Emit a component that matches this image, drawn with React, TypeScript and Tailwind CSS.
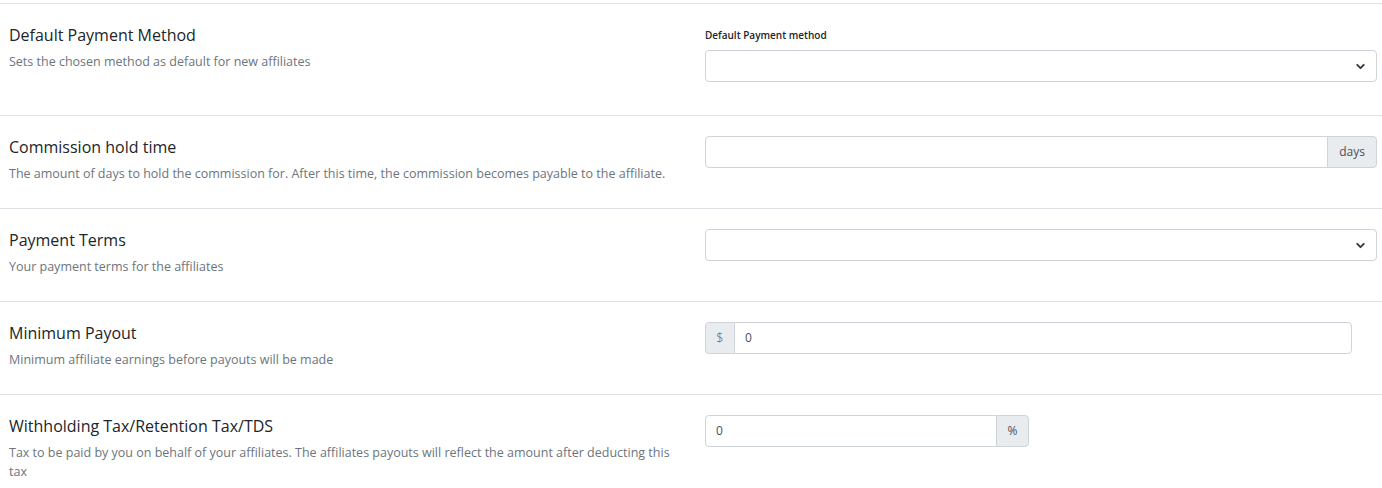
import { ChevronDown } from "lucide-react";

type Row = {
  title: string;
  desc: string;
  control: React.ReactNode;
};

const inputBase = "h-[32px] border border-[#ced4da] text-[12px] text-[#495057] flex items-center";

function SelectBox() {
  return (
    <div className={`${inputBase} bg-white px-[10px] rounded-[4px] justify-end w-full`}>
      <ChevronDown className="w-[13px] h-[13px] text-[#343a40] -mr-[1px]" strokeWidth={3.5} />
    </div>
  );
}

const rows: Row[] = [
  {
    title: "Default Payment Method",
    desc: "Sets the chosen method as default for new affiliates",
    control: (
      <div>
        <div className="text-[10px] font-semibold text-[#212529] h-[14px] leading-[14px] mb-[8px] -mt-[4px]">Default Payment method</div>
        <SelectBox />
      </div>
    ),
  },
  {
    title: "Commission hold time",
    desc: "The amount of days to hold the commission for. After this time, the commission becomes payable to the affiliate.",
    control: (
      <div className="flex">
        <div className={`${inputBase} bg-white px-[10px] rounded-l-[4px] flex-1`}></div>
        <div className={`${inputBase} rounded-r-[4px] -ml-px bg-[#e9ecef] w-[50px] justify-center text-[#6c757d]`}>days</div>
      </div>
    ),
  },
  {
    title: "Payment Terms",
    desc: "Your payment terms for the affiliates",
    control: <SelectBox />,
  },
  {
    title: "Minimum Payout",
    desc: "Minimum affiliate earnings before payouts will be made",
    control: (
      <div className="flex w-[647px]">
        <div className={`${inputBase} rounded-l-[4px] bg-[#e9ecef] w-[30px] justify-center text-[#6c757d] font-light`}>$</div>
        <div className={`${inputBase} bg-white px-[10px] rounded-r-[4px] -ml-px flex-1`}>0</div>
      </div>
    ),
  },
  {
    title: "Withholding Tax/Retention Tax/TDS",
    desc: "Tax to be paid by you on behalf of your affiliates. The affiliates payouts will reflect the amount after deducting this tax",
    control: (
      <div className="flex w-[324px]">
        <div className={`${inputBase} bg-white px-[10px] rounded-l-[4px] flex-1`}>0</div>
        <div className={`${inputBase} rounded-r-[4px] -ml-px bg-[#e9ecef] w-[33px] justify-center text-[#6c757d]`}>%</div>
      </div>
    ),
  },
];

export default function App() {
  return (
    <div className="bg-white w-[1382px] h-[488px] overflow-hidden pt-[3px]" style={{ fontFamily: '"Open Sans", "Noto Sans", sans-serif' }}>
      {rows.map((row, i) => (
        <div
          key={row.title}
          className={`border-t border-[#dee2e6] flex ${i === 0 ? "h-[112px]" : "h-[93px]"}`}
        >
          <div className="w-[691px] pl-[9px] pr-[6px] pt-[20px]">
            <div className="text-[16px] leading-[22px] text-[#212529]">{row.title}</div>
            <div className="text-[12.5px] leading-[19px] text-[#6c757d] mt-[6px]">{row.desc}</div>
          </div>
          <div className={`flex-1 pl-[14px] pr-[5px] ${i === 0 ? "pt-[28px]" : "pt-[20px]"}`}>{row.control}</div>
        </div>
      ))}
    </div>
  );
}
